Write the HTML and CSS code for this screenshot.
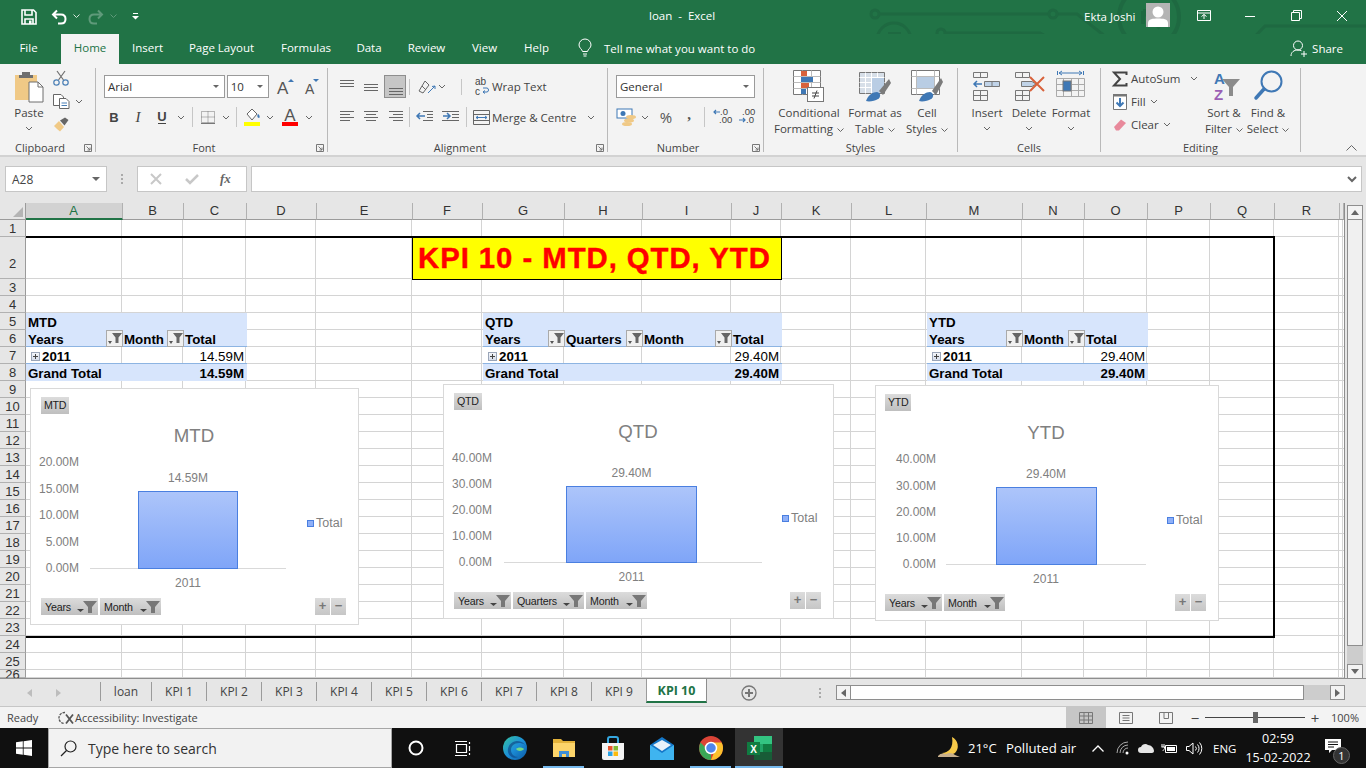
FILE: index.html
```html
<!DOCTYPE html>
<html lang="en">
<head>
<meta charset="utf-8">
<title>loan - Excel</title>
<link rel="stylesheet" href="styles.css">
</head>
<body>
<header class="titlebar">
  <svg class="circuit" width="506" height="66" viewBox="860 0 506 66" fill="none" stroke="#1e6941" stroke-width="3">
    <circle cx="875" cy="14" r="4"/><path d="M879 14H1049M1057 14H1077L1125 52H1240L1265 26H1366"/><circle cx="1053" cy="14" r="4"/>
    <circle cx="941" cy="33" r="4"/><path d="M945 33H1040L1096 64"/>
    <circle cx="1081" cy="43" r="4"/><path d="M865 62H968L990 43H1077M1085 43H1102L1122 62H1366"/><circle cx="865" cy="60" r="4"/>
    <circle cx="894" cy="40" r="17"/><path d="M888 34H901M888 34V46M888 34L904 50" stroke-width="4"/>
    <circle cx="1149" cy="17" r="30" stroke-width="4"/><path d="M1143 11H1156M1143 11V24M1143 11L1160 28" stroke-width="4"/>
  </svg>
  <div class="qat">
    <svg width="16" height="16" viewBox="0 0 16 16" fill="none" stroke="#fff" stroke-width="1.6"><path d="M1 1H12.5L15 3.5V15H1Z"/><path d="M4 1V6H11V1M4 15V10H12V15"/><path d="M8 11.5H10.5V15H8Z" fill="#fff" stroke="none"/></svg>
    <svg class="q-undo" width="16" height="16" viewBox="0 0 16 16" fill="none" stroke="#fff" stroke-width="2"><path d="M6 1.5L2 5.5L6 9.5M2 5.5H10C13 5.5 14.5 7.5 14.5 10S13 14.5 10 14.5H7"/></svg>
    <svg class="q-ch" width="7" height="5" viewBox="0 0 7 5" fill="none" stroke="#d7e6dc"><path d="M.5 .5L3.5 3.5L6.5 .5"/></svg>
    <svg class="q-redo" width="16" height="16" viewBox="0 0 16 16" fill="none" stroke="#5f9a7a" stroke-width="2"><path d="M10 1.5L14 5.5L10 9.5M14 5.5H6C3 5.5 1.5 7.5 1.5 10S3 14.5 6 14.5H9"/></svg>
    <svg class="q-ch" width="7" height="5" viewBox="0 0 7 5" fill="none" stroke="#5f9a7a"><path d="M.5 .5L3.5 3.5L6.5 .5"/></svg>
    <svg class="q-more" width="7" height="7" viewBox="0 0 7 7" fill="#fff"><path d="M1 0H6V1H1ZM0 3H7L3.5 6.5Z"/></svg>
  </div>
  <div class="doc-title">loan&nbsp; -&nbsp; Excel</div>
  <div class="user">Ekta Joshi</div>
  <svg class="avatar" width="24" height="24" viewBox="0 0 24 24"><rect width="24" height="24" fill="#b4b4b4"/><circle cx="12" cy="9" r="5.5" fill="#fff"/><path d="M2 24V20C2 16 7 15.5 12 15.5S22 16 22 20V24Z" fill="#fff"/></svg>
  <div class="winctl">
    <svg width="46" height="14" viewBox="0 0 46 14" fill="none" stroke="#fff"><path d="M16.5 1.5H29.5V11.5H16.5ZM16.5 4H29.5M23 10V5.5M20.5 7.5L23 5.5L25.5 7.5"/></svg>
    <svg width="46" height="14" viewBox="0 0 46 14" fill="none" stroke="#fff"><path d="M18 7.5H28"/></svg>
    <svg width="46" height="14" viewBox="0 0 46 14" fill="none" stroke="#fff"><path d="M18.5 3.5H26.5V11.5H18.5ZM20.5 3.5V1.5H28.5V9.5H26.5"/></svg>
    <svg width="46" height="14" viewBox="0 0 46 14" fill="none" stroke="#fff"><path d="M18 2L28 12M28 2L18 12"/></svg>
  </div>
</header>

<nav class="menubar">
  <span class="m">File</span><span class="m active">Home</span><span class="m">Insert</span><span class="m">Page Layout</span><span class="m">Formulas</span><span class="m">Data</span><span class="m">Review</span><span class="m">View</span><span class="m">Help</span>
  <svg class="bulb" width="14" height="18" viewBox="0 0 14 18" fill="none" stroke="#fff"><path d="M4.5 12.5C4 10 1 9 1 6A6 6 0 0 1 13 6C13 9 10 10 9.5 12.5ZM5 15H9M5.5 17H8.5"/></svg>
  <span class="tell">Tell me what you want to do</span>
  <span class="share">
    <svg width="18" height="17" viewBox="0 0 18 17" fill="none" stroke="#fff"><circle cx="8" cy="5.5" r="4.5"/><path d="M1 16C1 12 4 10 8 10C9.500 10 10.500 10.300 11.500 10.800M14 11V17M11 14H17"/></svg>
    Share
  </span>
</nav>

<section class="ribbon">
  <div class="group g-clip">
    <div class="g-body">
      <div class="big b-paste">
        <svg width="30" height="32" viewBox="0 0 30 32"><path d="M1 5H23V30H1Z" fill="#f0c986"/><path d="M8 5V2H16V5H19V8H5V5Z" fill="#6f6f6f"/><path d="M15 12H24L29 17V32H15Z" fill="#fff" stroke="#6f6f6f"/><path d="M24 12V17H29" fill="none" stroke="#6f6f6f"/></svg>
        <span class="lbl">Paste</span>
        <svg class="ch-big" width="8" height="5" viewBox="0 0 8 5" fill="none" stroke="#666"><path d="M1 1L4 4L7 1"/></svg>
      </div>
      <div class="clip-tools">
        <svg width="16" height="16" viewBox="0 0 16 16" fill="none" stroke="#6f6f6f" stroke-width="1.200"><path d="M4 1L10.500 10M12 1L5.500 10"/><circle cx="3.500" cy="12.500" r="2.700" stroke="#4a7fb5"/><circle cx="12.500" cy="12.500" r="2.700" stroke="#4a7fb5"/></svg>
        <div class="tool-row">
          <svg width="17" height="15" viewBox="0 0 17 15" fill="#fff" stroke="#666"><path d="M.5 .5H8L10.500 3V11.500H.5Z"/><path d="M6.500 4.500H13L16 7.500V14.500H6.500Z"/><path d="M8.500 9H14M8.500 11.500H14" stroke="#4a7fb5"/></svg>
          <svg class="tool-ch" width="8" height="5" viewBox="0 0 8 5" fill="none" stroke="#666"><path d="M1 1L4 4L7 1"/></svg>
        </div>
        <svg width="16" height="15" viewBox="0 0 16 15"><path d="M1 9L6 4L11 10L7 14.500L4 12Z" fill="#f0c986"/><path d="M7 3.500L12 0.500L15.500 3L11.500 8.500Z" fill="#666"/></svg>
      </div>
    </div>
    <div class="g-label launch">Clipboard<svg class="launcher" width="8" height="8" viewBox="0 0 8 8" fill="none" stroke="#777"><path d="M.5 7.500V.5H7.500V7.500ZM2.500 2.500L6 6M6 3.500V6H3.500"/></svg></div>
  </div>

  <div class="group g-font">
    <div class="g-body col">
      <div class="row1 pad8">
        <div class="select s-font"><span>Arial</span><i class="caret"></i></div>
        <div class="select s-size"><span>10</span><i class="caret"></i></div>
        <svg class="grow" width="50" height="22" viewBox="0 -3 50 22"><text x="0" y="15" class="ic-a">A</text><path d="M11 3L14 0L17 3Z" fill="#3f78b5"/><text x="28" y="15" class="ic-a small">A</text><path d="M36 0H42L39 3Z" fill="#3f78b5"/></svg>
      </div>
      <div class="row2 pad6">
        <svg width="24" height="16" viewBox="0 0 24 16"><text x="12" y="13" class="ic-t b">B</text></svg>
        <svg width="24" height="16" viewBox="0 0 24 16"><text x="12" y="13" class="ic-t it">I</text></svg>
        <svg width="24" height="16" viewBox="0 0 24 16"><text x="12" y="12" class="ic-t b">U</text><path d="M8 14.500H16" stroke="#444"/></svg>
        <svg width="14" height="5" viewBox="0 0 14 5" fill="none" stroke="#666"><path d="M4 1L7 4L10 1"/></svg>
        <i class="vsep m5"></i>
        <svg width="20" height="16" viewBox="0 0 20 16" fill="none" stroke="#777" stroke-dasharray="1 1"><path d="M3.500 2.500H16.500V13.500H3.500ZM10 2.500V13.500M3.500 8H16.500"/><path d="M3 14.500H17" stroke-dasharray="none"/></svg>
        <svg width="16" height="5" viewBox="0 0 16 5" fill="none" stroke="#666"><path d="M5 1L8 4L11 1"/></svg>
        <i class="vsep m2"></i>
        <svg width="26" height="20" viewBox="0 0 26 20"><path d="M8 7L13 2L18 7L13 13Z" fill="#fff" stroke="#666"/><path d="M19 7C21 8 21 11 20 11C18 11 18 8 19 7Z" fill="#3f78b5"/><rect x="5" y="15" width="16" height="4" fill="#ffff00"/></svg>
        <svg width="10" height="5" viewBox="0 0 10 5" fill="none" stroke="#666"><path d="M2 1L5 4L8 1"/></svg>
        <svg width="30" height="20" viewBox="0 0 30 20"><text x="15" y="14" class="ic-t a">A</text><rect x="7" y="15" width="16" height="4" fill="#f00"/></svg>
        <svg width="8" height="5" viewBox="0 0 8 5" fill="none" stroke="#666"><path d="M1 1L4 4L7 1"/></svg>
      </div>
    </div>
    <div class="g-label launch">Font<svg class="launcher" width="8" height="8" viewBox="0 0 8 8" fill="none" stroke="#777"><path d="M.5 7.500V.5H7.500V7.500ZM2.500 2.500L6 6M6 3.500V6H3.500"/></svg></div>
  </div>

  <div class="group g-align">
    <div class="g-body col">
      <div class="row1 pad7">
        <svg width="24" height="16" viewBox="0 0 24 16" stroke="#666"><path d="M5 1.500H19M5 4.500H19M5 7.500H19"/></svg>
        <svg width="25" height="16" viewBox="0 0 25 16" stroke="#666"><path d="M5 5.500H19M5 8.500H19M5 11.500H19"/></svg>
        <div class="pressed"><svg width="22" height="21" viewBox="0 0 22 21" stroke="#666"><path d="M4 12.500H18M4 15.500H18M4 18.500H18"/></svg></div>
        <i class="vsep m4 tall"></i>
        <svg width="24" height="18" viewBox="0 0 24 18" fill="none" stroke="#666"><path d="M5 13L11 3L15 7L9 15ZM8 8L12 12"/><path d="M14 15L21 8M21 8L18 8.500M21 8V11" stroke="#3f78b5"/></svg>
        <svg width="8" height="5" viewBox="0 0 8 5" fill="none" stroke="#666"><path d="M1 1L4 4L7 1"/></svg>
        <i class="vsep m15 tall"></i>
        <svg class="wrapic" width="18" height="22" viewBox="0 -2 18 22"><text x="1" y="7" class="ic-s">ab</text><text x="1" y="17" class="ic-s">c</text><path d="M9 14H13C15 14 15 10 13 10H9M9 14L11 12.500M9 14L11 15.500" fill="none" stroke="#3f78b5"/></svg>
        <span class="txt">Wrap Text</span>
      </div>
      <div class="row2 pad7">
        <svg width="24" height="14" viewBox="0 0 24 14" stroke="#666"><path d="M5 1.500H19M5 4.500H15M5 7.500H19M5 10.500H15"/></svg>
        <svg width="25" height="14" viewBox="0 0 25 14" stroke="#666"><path d="M5 1.500H19M7 4.500H17M5 7.500H19M7 10.500H17"/></svg>
        <svg width="24" height="14" viewBox="0 0 24 14" stroke="#666"><path d="M5 1.500H19M9 4.500H19M5 7.500H19M9 10.500H19"/></svg>
        <i class="vsep m0"></i>
        <svg width="28" height="14" viewBox="0 0 28 14" fill="none"><path d="M12 1.500H22M16 4.500H22M16 7.500H22M12 10.500H22" stroke="#666"/><path d="M14 6H6M9 3L6 6L9 9" stroke="#3f78b5" stroke-width="1.500"/></svg>
        <svg width="24" height="14" viewBox="0 0 24 14" fill="none"><path d="M3 1.500H20M13 4.500H20M13 7.500H20M3 10.500H20" stroke="#666"/><path d="M4 6H11M8 3L11 6L8 9" stroke="#3f78b5" stroke-width="1.500"/></svg>
        <i class="vsep m3"></i>
        <svg class="mergeic" width="17" height="15" viewBox="0 0 17 15" fill="none"><path d="M.5 .5H16.500V14.500H.5Z" stroke="#666"/><path d="M.5 4.500H16.500M.5 10.500H16.500" stroke="#666"/><path d="M3 7.500H14M5 6L3 7.500L5 9M12 6L14 7.500L12 9" stroke="#3f78b5"/></svg>
        <span class="txt">Merge &amp; Centre</span>
        <svg class="merge-ch" width="8" height="5" viewBox="0 0 8 5" fill="none" stroke="#666"><path d="M1 1L4 4L7 1"/></svg>
      </div>
    </div>
    <div class="g-label launch">Alignment<svg class="launcher" width="8" height="8" viewBox="0 0 8 8" fill="none" stroke="#777"><path d="M.5 7.500V.5H7.500V7.500ZM2.500 2.500L6 6M6 3.500V6H3.500"/></svg></div>
  </div>

  <div class="group g-num">
    <div class="g-body col">
      <div class="row1 pad8"><div class="select s-gen"><span>General</span><i class="caret"></i></div></div>
      <div class="row2 pad8">
        <svg width="22" height="18" viewBox="0 0 22 18"><rect x="1" y="1" width="15" height="9" fill="#fff" stroke="#3f78b5"/><circle cx="7" cy="5.500" r="2.500" fill="#3f78b5"/><ellipse cx="15" cy="9" rx="5" ry="2" fill="#f0c986"/><ellipse cx="13" cy="12.500" rx="5" ry="2" fill="#f0c986"/><ellipse cx="11" cy="16" rx="5" ry="2" fill="#f0c986"/></svg>
        <svg width="14" height="5" viewBox="0 0 14 5" fill="none" stroke="#666"><path d="M4 1L7 4L10 1"/></svg>
        <span class="pct">%</span>
        <span class="comma">,</span>
        <i class="vsep m7"></i>
        <svg width="20" height="18" viewBox="0 0 20 18"><text x="8" y="7" class="ic-n">.0</text><text x="7" y="15" class="ic-n">.00</text><path d="M8 4H2M4 2L2 4L4 6" fill="none" stroke="#3f78b5" stroke-width="1.200"/></svg>
        <svg class="dec2" width="20" height="18" viewBox="0 0 20 18"><text x="5" y="7" class="ic-n">.00</text><text x="9" y="15" class="ic-n">.0</text><path d="M2 12H8M6 10L8 12L6 14" fill="none" stroke="#3f78b5" stroke-width="1.200"/></svg>
      </div>
    </div>
    <div class="g-label launch">Number<svg class="launcher" width="8" height="8" viewBox="0 0 8 8" fill="none" stroke="#777"><path d="M.5 7.500V.5H7.500V7.500ZM2.500 2.500L6 6M6 3.500V6H3.500"/></svg></div>
  </div>

  <div class="group g-styles">
    <div class="g-body">
      <div class="big w74">
        <svg width="32" height="32" viewBox="0 0 32 32"><path d="M.5 .5H27.500V24.500H.5Z" fill="#fff" stroke="#777"/><path d="M9.500 .5V24.500M18.500 .5V24.500M.5 6.500H27.500M.5 12.500H27.500M.5 18.500H27.500" stroke="#bbb"/><rect x="8" y="1" width="6" height="5" fill="#d8623b"/><rect x="8" y="7" width="12" height="5" fill="#3f78b5"/><rect x="8" y="13" width="8" height="5" fill="#d8623b"/><rect x="8" y="19" width="5" height="5" fill="#3f78b5"/><rect x="14.500" y="17.500" width="16" height="14" fill="#fff" stroke="#777"/><path d="M19 23H26M19 26H26M24 20.500L21 28.500" stroke="#444" fill="none"/></svg>
        <span class="lbl">Conditional<br>Formatting <svg width="7" height="4" viewBox="0 0 7 4" fill="none" stroke="#666"><path d="M.5 .5L3.500 3.500L6.500 .5"/></svg></span>
      </div>
      <div class="big w58">
        <svg width="32" height="32" viewBox="0 0 32 32"><path d="M.5 2.500H25.500V23.500H.5Z" fill="#d7dfe8" stroke="#777"/><path d="M.5 7.500H25.500M.5 12.500H25.500M.5 17.500H25.500M6.500 2.500V23.500M12.500 2.500V23.500M18.500 2.500V23.500" stroke="#fff"/><rect x="13" y="8" width="12" height="15" fill="#b9cde4"/><path d="M20 21L30 9L32 13L24 25Z" fill="#7b7b7b"/><path d="M7 31C9 25 14 22 18 22C22 23 22 27 19 29C16 31 10 32 7 31Z" fill="#3f78b5"/></svg>
        <span class="lbl">Format as<br>Table <svg width="7" height="4" viewBox="0 0 7 4" fill="none" stroke="#666"><path d="M.5 .5L3.500 3.500L6.500 .5"/></svg></span>
      </div>
      <div class="big w46">
        <svg width="32" height="32" viewBox="0 0 32 32"><path d="M.5 .5H28.500V24.500H.5Z" fill="#fff" stroke="#777"/><path d="M.5 6.500H28.500M.5 18.500H28.500M5.500 .5V24.500M23.500 .5V24.500" stroke="#bbb"/><rect x="6" y="7" width="17" height="11" fill="#b9cde4"/><path d="M21 21L30 8L32 12L25 25Z" fill="#7b7b7b"/><path d="M8 31C10 25 15 22 19 22C23 23 23 27 20 29C17 31 11 32 8 31Z" fill="#3f78b5"/></svg>
        <span class="lbl">Cell<br>Styles <svg width="7" height="4" viewBox="0 0 7 4" fill="none" stroke="#666"><path d="M.5 .5L3.500 3.500L6.500 .5"/></svg></span>
      </div>
    </div>
    <div class="g-label">Styles</div>
  </div>

  <div class="group g-cells">
    <div class="g-body">
      <div class="big w42">
        <svg width="32" height="32" viewBox="0 0 32 32" fill="none" stroke="#777"><path d="M2.500 2.500H16.500V7.500H2.500ZM9.500 2.500V7.500M2.500 20.500H16.500V30.500H2.500ZM2.500 25.500H16.500M9.500 20.500V30.500"/><path d="M13.500 11.500H28.500V16.500H13.500ZM21 11.500V16.500" fill="#c0d3e8" stroke="#777"/><path d="M11 14H3M6 11L3 14L6 17" stroke="#3f78b5" stroke-width="1.500"/></svg>
        <span class="lbl">Insert</span>
        <svg class="ch-big" width="8" height="5" viewBox="0 0 8 5" fill="none" stroke="#666"><path d="M1 1L4 4L7 1"/></svg>
      </div>
      <div class="big w42">
        <svg width="32" height="32" viewBox="0 0 32 32" fill="none" stroke="#777"><path d="M2.500 2.500H16.500V7.500H2.500ZM9.500 2.500V7.500M2.500 20.500H16.500V30.500H2.500ZM2.500 25.500H16.500M9.500 20.500V30.500"/><path d="M8.500 11.500H19L23 14L19 16.500H8.500Z" fill="#c0d3e8"/><path d="M17 7L31 21M31 7L17 21" stroke="#d8623b" stroke-width="2"/></svg>
        <span class="lbl">Delete</span>
        <svg class="ch-big" width="8" height="5" viewBox="0 0 8 5" fill="none" stroke="#666"><path d="M1 1L4 4L7 1"/></svg>
      </div>
      <div class="big w42">
        <svg width="32" height="32" viewBox="0 0 32 32" fill="none" stroke="#777"><path d="M2.500 1V5M28.500 1V5M4 3H27M4 3L7 1M4 3L7 5M27 3L24 1M27 3L24 5" stroke="#3f78b5"/><path d="M1.500 8.500H29.500V26.500H1.500ZM1.500 14.500H29.500M1.500 20.500H29.500M8.500 8.500V26.500M16.500 8.500V26.500M23.500 8.500V26.500" stroke="#aaa"/><rect x="8" y="11" width="8" height="10" fill="#3f78b5"/></svg>
        <span class="lbl">Format</span>
        <svg class="ch-big" width="8" height="5" viewBox="0 0 8 5" fill="none" stroke="#666"><path d="M1 1L4 4L7 1"/></svg>
      </div>
    </div>
    <div class="g-label">Cells</div>
  </div>

  <div class="group g-edit">
    <div class="g-body">
      <div class="edit-col">
        <div class="e-row"><svg width="19" height="16" viewBox="0 0 19 16" fill="none" stroke="#444" stroke-width="2"><path d="M14.500 4V1.500H2L8 8L2 14.500H14.500V12"/></svg><span class="txt">AutoSum</span><svg class="as-ch" width="8" height="5" viewBox="0 0 8 5" fill="none" stroke="#666"><path d="M1 1L4 4L7 1"/></svg></div>
        <div class="e-row"><svg width="19" height="16" viewBox="0 0 19 16"><path d="M1.500 .5H14.500V15.500H1.500Z" fill="#fff" stroke="#777"/><rect x="1" y="0" width="14" height="2.500" fill="#777"/><path d="M8 4V12M4.500 8.500L8 12L11.500 8.500" fill="none" stroke="#3f78b5" stroke-width="2"/></svg><span class="txt">Fill</span><svg class="e-ch" width="8" height="5" viewBox="0 0 8 5" fill="none" stroke="#666"><path d="M1 1L4 4L7 1"/></svg></div>
        <div class="e-row"><svg width="19" height="14" viewBox="0 0 19 14"><path d="M2 9L9 1.500L14 5L7 12.500H4Z" fill="#e8899b"/></svg><span class="txt">Clear</span><svg class="e-ch" width="8" height="5" viewBox="0 0 8 5" fill="none" stroke="#666"><path d="M1 1L4 4L7 1"/></svg></div>
      </div>
      <div class="big w44">
        <svg width="32" height="32" viewBox="0 0 32 32"><text x="6" y="14" class="ic-az bl">A</text><text x="6" y="30" class="ic-az pu">Z</text><path d="M14 9H32L25 17V26H21V17Z" fill="#8b8b8b"/></svg>
        <span class="lbl">Sort &amp;<br>Filter <svg width="7" height="4" viewBox="0 0 7 4" fill="none" stroke="#666"><path d="M.5 .5L3.500 3.500L6.500 .5"/></svg></span>
      </div>
      <div class="big w44">
        <svg width="32" height="32" viewBox="0 0 32 32" fill="none" stroke="#3f78b5"><circle cx="19.500" cy="11.500" r="10" stroke-width="2"/><path d="M12 19L4 28" stroke-width="3.500" stroke-linecap="round"/></svg>
        <span class="lbl">Find &amp;<br>Select <svg width="7" height="4" viewBox="0 0 7 4" fill="none" stroke="#666"><path d="M.5 .5L3.500 3.500L6.500 .5"/></svg></span>
      </div>
    </div>
    <div class="g-label">Editing</div>
  </div>
  <svg class="collapse" width="11" height="6" viewBox="0 0 11 6" fill="none" stroke="#666"><path d="M.5 5.500L5.500 .5L10.500 5.500"/></svg>
</section>

<section class="formula">
  <div class="namebox"><span>A28</span><i class="caret dark"></i></div>
  <div class="fdots"><i></i><i></i><i></i></div>
  <div class="fbtns">
    <svg width="14" height="12" viewBox="0 0 14 12" fill="none" stroke="#c8c8c8" stroke-width="2"><path d="M2 1L12 11M12 1L2 11"/></svg>
    <svg width="14" height="12" viewBox="0 0 14 12" fill="none" stroke="#c8c8c8" stroke-width="2.500"><path d="M1 6L5 10L13 2"/></svg>
    <span class="fx">fx</span>
  </div>
  <div class="finput"><svg width="10" height="6" viewBox="0 0 10 6" fill="none" stroke="#666" stroke-width="2"><path d="M1 1L5 5L9 1"/></svg></div>
</section>

<section class="book">
  <div class="sheet">
    <div class="corner"><i></i></div>
    <div class="ch sel">A</div><div class="ch">B</div><div class="ch">C</div><div class="ch">D</div><div class="ch">E</div><div class="ch">F</div><div class="ch">G</div><div class="ch">H</div><div class="ch">I</div><div class="ch">J</div><div class="ch">K</div><div class="ch">L</div><div class="ch">M</div><div class="ch">N</div><div class="ch">O</div><div class="ch">P</div><div class="ch">Q</div><div class="ch">R</div><div class="ch"></div>
    <div class="rh">1</div><div class="rh tall">2</div><div class="rh">3</div><div class="rh">4</div><div class="rh">5</div><div class="rh">6</div><div class="rh">7</div><div class="rh">8</div><div class="rh">9</div><div class="rh">10</div><div class="rh">11</div><div class="rh">12</div><div class="rh">13</div><div class="rh">14</div><div class="rh">15</div><div class="rh">16</div><div class="rh">17</div><div class="rh">18</div><div class="rh">19</div><div class="rh">20</div><div class="rh">21</div><div class="rh">22</div><div class="rh">23</div><div class="rh">24</div><div class="rh">25</div><div class="rh">26</div>

    <div class="kpi-title">KPI 10 - MTD, QTD, YTD</div>

    <div class="pivot pv1">
      <div class="p-cap s3">MTD</div>
      <div class="p-h">Years<i class="fbtn"></i></div><div class="p-h">Month<i class="fbtn"></i></div><div class="p-h">Total</div>
      <div class="p-v"><i class="exp"></i>2011</div><div class="p-v"></div><div class="p-v num">14.59M</div>
      <div class="p-g s2">Grand Total</div><div class="p-g num">14.59M</div>
    </div>
    <div class="pivot pv2">
      <div class="p-cap s4">QTD</div>
      <div class="p-h">Years<i class="fbtn"></i></div><div class="p-h">Quarters<i class="fbtn"></i></div><div class="p-h">Month<i class="fbtn"></i></div><div class="p-h">Total</div>
      <div class="p-v"><i class="exp"></i>2011</div><div class="p-v"></div><div class="p-v"></div><div class="p-v num">29.40M</div>
      <div class="p-g s3">Grand Total</div><div class="p-g num">29.40M</div>
    </div>
    <div class="pivot pv3">
      <div class="p-cap s3">YTD</div>
      <div class="p-h">Years<i class="fbtn"></i></div><div class="p-h">Month<i class="fbtn"></i></div><div class="p-h">Total</div>
      <div class="p-v"><i class="exp"></i>2011</div><div class="p-v"></div><div class="p-v num">29.40M</div>
      <div class="p-g s2">Grand Total</div><div class="p-g num">29.40M</div>
    </div>

    <div class="frame"></div>

    <div class="chart c1">
      <svg class="plot" width="327" height="235" viewBox="31 389 327 235">
        <defs><linearGradient id="bar" x1="0" y1="0" x2="0" y2="1"><stop offset="0" stop-color="#adc5fa"/><stop offset="1" stop-color="#7fa5f8"/></linearGradient></defs>
        <text x="194" y="442" class="t-title">MTD</text>
        <text x="79" y="466" class="t-y">20.00M</text><text x="79" y="493" class="t-y">15.00M</text><text x="79" y="519" class="t-y">10.00M</text><text x="79" y="546" class="t-y">5.00M</text><text x="79" y="572" class="t-y">0.00M</text>
        <path d="M90 568.500H286" class="axis"/>
        <rect x="138.500" y="491.500" width="99" height="77" class="barrect"/>
        <text x="188" y="482" class="t-c">14.59M</text><text x="188" y="587" class="t-c">2011</text>
        <rect x="307.500" y="520.500" width="6" height="6" class="leg"/><text x="316" y="527" class="t-l">Total</text>
      </svg>
      <div class="tag">MTD</div>
      <div class="c-foot">
        <div class="fb fb-y">Years<svg width="24" height="13" viewBox="0 0 24 13"><path d="M3 9H10L6.500 12Z" fill="#444"/><path d="M9 1H23L18 7V13H14V7Z" fill="#777"/></svg></div>
        <div class="fb fb-m">Month<svg width="24" height="13" viewBox="0 0 24 13"><path d="M3 9H10L6.500 12Z" fill="#444"/><path d="M9 1H23L18 7V13H14V7Z" fill="#777"/></svg></div>
        <div class="zoom"><span>+</span><span>−</span></div>
      </div>
    </div>

    <div class="chart c2">
      <svg class="plot" width="389" height="233" viewBox="444 385 389 233">
        <text x="638" y="438" class="t-title">QTD</text>
        <text x="492" y="462" class="t-y">40.00M</text><text x="492" y="488" class="t-y">30.00M</text><text x="492" y="514" class="t-y">20.00M</text><text x="492" y="540" class="t-y">10.00M</text><text x="492" y="566" class="t-y">0.00M</text>
        <path d="M504 562.500H762" class="axis"/>
        <rect x="566.500" y="486.500" width="130" height="76" class="barrect"/>
        <text x="631.500" y="477" class="t-c">29.40M</text><text x="631.500" y="581" class="t-c">2011</text>
        <rect x="782.500" y="515.500" width="6" height="6" class="leg"/><text x="791" y="522" class="t-l">Total</text>
      </svg>
      <div class="tag">QTD</div>
      <div class="c-foot">
        <div class="fb fb-y">Years<svg width="24" height="13" viewBox="0 0 24 13"><path d="M3 9H10L6.500 12Z" fill="#444"/><path d="M9 1H23L18 7V13H14V7Z" fill="#777"/></svg></div>
        <div class="fb fb-q">Quarters<svg width="24" height="13" viewBox="0 0 24 13"><path d="M3 9H10L6.500 12Z" fill="#444"/><path d="M9 1H23L18 7V13H14V7Z" fill="#777"/></svg></div>
        <div class="fb fb-m">Month<svg width="24" height="13" viewBox="0 0 24 13"><path d="M3 9H10L6.500 12Z" fill="#444"/><path d="M9 1H23L18 7V13H14V7Z" fill="#777"/></svg></div>
        <div class="zoom"><span>+</span><span>−</span></div>
      </div>
    </div>

    <div class="chart c3">
      <svg class="plot" width="342" height="234" viewBox="876 386 342 234">
        <text x="1046" y="439" class="t-title">YTD</text>
        <text x="936" y="463" class="t-y">40.00M</text><text x="936" y="490" class="t-y">30.00M</text><text x="936" y="516" class="t-y">20.00M</text><text x="936" y="542" class="t-y">10.00M</text><text x="936" y="568" class="t-y">0.00M</text>
        <path d="M946 564.500H1146" class="axis"/>
        <rect x="996.500" y="487.500" width="100" height="77" class="barrect"/>
        <text x="1046" y="478" class="t-c">29.40M</text><text x="1046" y="583" class="t-c">2011</text>
        <rect x="1167.500" y="517.500" width="6" height="6" class="leg"/><text x="1176" y="524" class="t-l">Total</text>
      </svg>
      <div class="tag">YTD</div>
      <div class="c-foot">
        <div class="fb fb-y">Years<svg width="24" height="13" viewBox="0 0 24 13"><path d="M3 9H10L6.500 12Z" fill="#444"/><path d="M9 1H23L18 7V13H14V7Z" fill="#777"/></svg></div>
        <div class="fb fb-m">Month<svg width="24" height="13" viewBox="0 0 24 13"><path d="M3 9H10L6.500 12Z" fill="#444"/><path d="M9 1H23L18 7V13H14V7Z" fill="#777"/></svg></div>
        <div class="zoom"><span>+</span><span>−</span></div>
      </div>
    </div>
  </div>

  <div class="vscroll">
    <div class="sb-btn"><svg width="8" height="5" viewBox="0 0 8 5" fill="#666"><path d="M4 0L8 5H0Z"/></svg></div>
    <div class="sb-thumb"></div>
    <div class="sb-btn"><svg width="8" height="5" viewBox="0 0 8 5" fill="#666"><path d="M4 5L8 0H0Z"/></svg></div>
  </div>
</section>

<section class="tabbar">
  <div class="tabnav">
    <svg width="5" height="8" viewBox="0 0 5 8" fill="#bdbdbd"><path d="M5 0V8L0 4Z"/></svg>
    <svg width="5" height="8" viewBox="0 0 5 8" fill="#bdbdbd"><path d="M0 0V8L5 4Z"/></svg>
  </div>
  <div class="tab first">loan</div><div class="tab">KPI 1</div><div class="tab">KPI 2</div><div class="tab">KPI 3</div><div class="tab">KPI 4</div><div class="tab">KPI 5</div><div class="tab">KPI 6</div><div class="tab">KPI 7</div><div class="tab">KPI 8</div><div class="tab">KPI 9</div><div class="tab active">KPI 10</div>
  <div class="tabtools">
    <svg width="16" height="16" viewBox="0 0 16 16" fill="none" stroke="#777" stroke-width="1.300"><circle cx="8" cy="8" r="7"/><path d="M8 4V12M4 8H12" stroke-width="2"/></svg>
    <div class="tdots"><i></i><i></i><i></i></div>
  </div>
  <div class="hscroll">
    <div class="hb"><svg width="5" height="8" viewBox="0 0 5 8" fill="#666"><path d="M5 0V8L0 4Z"/></svg></div>
    <div class="h-thumb"></div>
    <div class="h-track"></div>
    <div class="hb"><svg width="5" height="8" viewBox="0 0 5 8" fill="#666"><path d="M0 0V8L5 4Z"/></svg></div>
  </div>
</section>

<footer class="status">
  <span class="ready">Ready</span>
  <svg class="acc" width="17" height="14" viewBox="0 0 17 14" fill="none" stroke="#555"><path d="M8 1.500A5.500 5.500 0 1 0 7 12.500" stroke-width="1.300" stroke-dasharray="2.500 1"/><path d="M9 3.500L16 12.500M16 3.500L9 12.500" stroke-width="1.800"/></svg>
  <span class="acc-t">Accessibility: Investigate</span>
  <div class="views">
    <div class="view on"><svg width="14" height="12" viewBox="0 0 14 12" fill="none" stroke="#777"><path d="M.5 .5H13.500V11.500H.5ZM.5 4H13.500M.5 8H13.500M5 .5V11.500M9.500 .5V11.500"/></svg></div>
    <div class="view"><svg width="14" height="12" viewBox="0 0 14 12" fill="none" stroke="#777"><path d="M.5 .5H13.500V11.500H.5ZM3.500 3.500H10.500M3.500 6H10.500M3.500 8.500H10.500"/></svg></div>
    <div class="view"><svg width="14" height="12" viewBox="0 0 14 12" fill="none" stroke="#777"><path d="M.5 .5H13.500V11.500H.5ZM5 .5V6.500H9.500V.5"/></svg></div>
  </div>
  <span class="zm">−</span>
  <div class="slider"><i></i></div>
  <span class="zm">+</span>
  <span class="pcnt">100%</span>
</footer>

<footer class="taskbar">
  <div class="start"><svg width="16" height="16" viewBox="0 0 16 16" fill="#fff"><path d="M0 2.300L6.800 1.300V7.500H0ZM7.600 1.200L16 0V7.500H7.600ZM0 8.400H6.800V14.700L0 13.700ZM7.600 8.400H16V16L7.600 14.800Z"/></svg></div>
  <div class="search">
    <svg width="17" height="17" viewBox="0 0 17 17" fill="none" stroke="#222" stroke-width="1.200"><circle cx="10.500" cy="6.500" r="5.500"/><path d="M6.500 10.500L1 16"/></svg>
    <span>Type here to search</span>
  </div>
  <div class="tb tb-c"><svg width="16" height="16" viewBox="0 0 16 16" fill="none" stroke="#fff" stroke-width="2"><circle cx="8" cy="8" r="6.500"/></svg></div>
  <div class="tb tb-t"><svg width="16" height="15" viewBox="0 0 16 15" fill="none" stroke="#fff" stroke-width="1.200"><path d="M0 .5H12M0 14.500H12M1.500 3.500H11.500V11.500H1.500Z"/><path d="M14.500 1V3M14.500 5V10M14.500 12V14"/></svg></div>
  <div class="tb"><svg width="24" height="24" viewBox="0 0 24 24"><defs><linearGradient id="ed" x1="0" y1="0" x2="1" y2="1"><stop offset="0" stop-color="#36c5a0"/><stop offset=".5" stop-color="#1c8fd8"/><stop offset="1" stop-color="#0c59a4"/></linearGradient></defs><circle cx="12" cy="12" r="12" fill="url(#ed)"/><path d="M24 13C24 9 20 7 16 7C11 7 8 10 8 14C8 18 11 21 15 21C12 23 6 21 5 16C4 11 8 5 14 5C20 5 23 9 24 13Z" fill="#0e3f7e" opacity=".6"/><path d="M13 13C15 11 19 11 21 13C20 15 15 16 13 13Z" fill="#7be27f" opacity=".9"/></svg></div>
  <div class="tb on1"><svg width="22" height="20" viewBox="0 0 22 20"><path d="M0 1H8L10 3H22V19H0Z" fill="#e3b23a"/><path d="M0 5H22V19H0Z" fill="#fcd46a"/><path d="M6 13H16V19H13V16H9V19H6Z" fill="#3f8fd8"/></svg></div>
  <div class="tb"><svg width="24" height="24" viewBox="0 0 24 24"><path d="M1 7H23V22A2 2 0 0 1 21 24H3A2 2 0 0 1 1 22Z" fill="#f4f4f4"/><path d="M7 7V3A2 2 0 0 1 9 1H15A2 2 0 0 1 17 3V7" fill="none" stroke="#35a7e0" stroke-width="2"/><rect x="7" y="10" width="4.500" height="4.500" fill="#e8532d"/><rect x="12.500" y="10" width="4.500" height="4.500" fill="#7fb935"/><rect x="7" y="15.500" width="4.500" height="4.500" fill="#2aa3e6"/><rect x="12.500" y="15.500" width="4.500" height="4.500" fill="#fcbb0d"/></svg></div>
  <div class="tb"><svg width="24" height="23" viewBox="0 0 24 23"><path d="M0 8L12 0L24 8V23H0Z" fill="#1477c8"/><path d="M0 8L12 16L24 8V23H0Z" fill="#3fb4f0"/><path d="M3 8L12 3L21 8L12 14Z" fill="#fff" opacity=".9"/></svg></div>
  <div class="tb on1"><svg width="24" height="24" viewBox="0 0 24 24"><circle cx="12" cy="12" r="12" fill="#db4437"/><path d="M12 24A12 12 0 0 0 24 12C24 10 23.500 8 22.500 6.500H12L17 12Z" fill="#fbc02d"/><path d="M12 24A12 12 0 0 1 1.500 6.500L7 12L12 17Z" fill="#3aa757"/><circle cx="12" cy="12" r="5.500" fill="#4f86ec" stroke="#fff" stroke-width="1.500"/></svg></div>
  <div class="tb excel"><svg width="25" height="24" viewBox="0 0 25 24"><rect x="7" y="0" width="18" height="24" rx="1" fill="#21a366"/><rect x="7" y="0" width="18" height="8" fill="#33c481"/><rect x="7" y="16" width="18" height="8" fill="#185c37"/><rect x="16" y="8" width="9" height="8" fill="#107c41"/><rect x="0" y="6" width="13" height="13" fill="#107c41"/><text x="6.500" y="16.500" class="ic-x">X</text></svg></div>
  <div class="tray">
    <svg class="wx" width="24" height="24" viewBox="0 0 24 24"><path d="M15 1A10 10 0 0 1 18 17C14 20 8 19 5 17C11 17 17 12 15 1Z" fill="#f7c948"/><path d="M1 20C3 17 7 17 9 18C12 16 16 17 18 19L23 21H1Z" fill="#c9b08c"/></svg>
    <span class="temp">21°C</span><span class="air">Polluted air</span>
    <svg class="caretup" width="12" height="7" viewBox="0 0 12 7" fill="none" stroke="#fff" stroke-width="1.300"><path d="M.5 6.500L6 1L11.500 6.500"/></svg>
    <svg class="wifi" width="14" height="14" viewBox="0 0 14 14" fill="none" stroke="#aaa"><path d="M1 12A11 11 0 0 1 12 1M4 12A8 8 0 0 1 12 4M7 12A5 5 0 0 1 12 7"/><circle cx="11" cy="12" r="1.500" fill="#fff" stroke="none"/></svg>
    <svg class="cloud" width="16" height="10" viewBox="0 0 16 10" fill="#e6e6e6"><path d="M3 10A3 3 0 0 1 3 4C4 1 8 0 10 2C13 2 16 5 16 8C16 9 15 10 14 10Z"/></svg>
    <svg class="batt" width="16" height="10" viewBox="0 0 16 10" fill="none" stroke="#fff"><path d="M4.500 2.500H15.500V9.500H4.500ZM1 1V4M3 1V4M0.500 4H3.500V5.500C3 7 2 7 2 8"/><rect x="6" y="4" width="8" height="4" fill="#fff" stroke="none"/></svg>
    <svg class="spk" width="17" height="13" viewBox="0 0 17 13" fill="none" stroke="#fff"><path d="M.5 4.500H3L7 1V12L3 8.500H.5ZM9.500 4.500A3 3 0 0 1 9.500 8.500M11.500 2.500A6 6 0 0 1 11.500 10.500M13.500 .5A9 9 0 0 1 13.500 12.500"/></svg>
    <span class="eng">ENG</span>
    <div class="clock"><span>02:59</span><span>15-02-2022</span></div>
    <div class="notif">
      <svg width="16" height="14" viewBox="0 0 16 14" fill="#fff"><path d="M0 0H16V11H7L4 14V11H0Z"/><path d="M3 3H13M3 5.500H13M3 8H9" stroke="#101010"/></svg>
      <span class="badge">1</span>
    </div>
  </div>
</footer>
</body>
</html>
```
FILE: styles.css
```css
* { box-sizing: border-box; }
html, body { margin: 0; padding: 0; }
body {
  width: 1366px; height: 768px; overflow: hidden;
  display: flex; flex-direction: column;
  font-family: "Open Sans", "Noto Sans", sans-serif;
  font-size: 11.5px; color: #444; background: #e6e6e6;
}
svg { display: block; flex: none; overflow: visible; }
i { display: block; font-style: normal; }

/* Title bar */
.titlebar { position: relative; height: 34px; background: #217346; color: #fff; display: flex; align-items: center; flex: none; overflow: hidden; }
.circuit { position: absolute; left: 860px; top: 0; }
.qat { width: 649px; padding: 0 0 1px 21px; display: flex; align-items: center; position: relative; }
.q-undo { margin-left: 14px; }
.q-ch { margin-left: 6px; }
.q-redo { margin-left: 8px; }
.q-more { margin-left: 15px; }
.doc-title { width: 435px; position: relative; font-size: 11.5px; padding-bottom: 3px; }
.user { width: 62px; position: relative; font-size: 11.5px; padding-bottom: 2px; }
.avatar { position: relative; margin-bottom: 4px; }
.winctl { display: flex; position: relative; margin: 0 0 2px 11px; }

/* Menu */
.menubar { height: 30px; background: #217346; color: #fff; display: flex; align-items: center; flex: none; position: relative; font-size: 11.5px; }
.m { height: 30px; line-height: 28px; text-align: center; flex: none; }
.m:nth-child(1) { width: 61px; padding: 0 4px 0 0; text-align: center; }
.m.active { background: #f3f3f3; color: #217346; width: 58px; }
.m:nth-child(3) { width: 57px; }
.m:nth-child(4) { width: 91px; }
.m:nth-child(5) { width: 78px; }
.m:nth-child(6) { width: 48px; }
.m:nth-child(7) { width: 67px; }
.m:nth-child(8) { width: 49px; }
.m:nth-child(9) { width: 55px; }
.bulb { margin: 0 0 2px 14px; }
.tell { margin: 0 0 2px 12px; }
.share { margin: 0 23px 2px auto; display: flex; align-items: center; gap: 4px; }

/* Ribbon */
.ribbon { position: relative; height: 93px; background: #f3f3f3; border-bottom: 2px solid #d2d2d2; display: flex; flex: none; }
.group { display: flex; flex-direction: column; height: 84px; margin-top: 4px; border-right: 1px solid #b9b9b9; }
.g-clip { width: 96px; } .g-font { width: 232px; } .g-align { width: 280px; } .g-num { width: 156px; }
.g-styles { width: 194px; } .g-cells { width: 143px; } .g-edit { width: 200px; }
.g-body { flex: none; height: 72px; display: flex; padding: 2px 0 0 8px; }
.g-body.col { flex-direction: column; padding: 7px 0 0; }
.g-label { height: 12px; line-height: 16px; text-align: center; position: relative; font-size: 11px; }
.g-label.launch { padding-right: 15px; }
.launcher { position: absolute; right: 3px; top: 4px; }
.big { display: flex; flex-direction: column; align-items: center; flex: none; }
.big .lbl { line-height: 16px; margin-top: 3px; text-align: center; white-space: nowrap; font-size: 11.5px; }
.big .lbl svg { display: inline-block; vertical-align: middle; margin-left: 1px; }
.ch-big { margin-top: 5px; }
.w74 { width: 74px; } .w58 { width: 58px; } .w46 { width: 46px; } .w42 { width: 42px; } .w44 { width: 44px; }
.b-paste { width: 30px; margin-left: 6px; }
.clip-tools { margin-left: 9px; display: flex; flex-direction: column; gap: 8px; }
.tool-row { display: flex; align-items: center; }
.tool-ch { margin-left: 5px; }
.row1 { height: 23px; display: flex; align-items: center; }
.row2 { height: 20px; margin-top: 9px; display: flex; align-items: center; }
.pad8 { padding-left: 8px; } .pad6 { padding-left: 6px; } .pad7 { padding-left: 7px; }
.select { height: 23px; background: #fff; border: 1px solid #9a9a9a; display: flex; align-items: center; justify-content: space-between; padding: 0 5px 0 3px; font-size: 11.5px; color: #333; }
.s-font { width: 123px; } .s-size { width: 43px; margin-left: 2px; } .s-gen { width: 139px; }
.caret { width: 0; height: 0; border: 3px solid transparent; border-top: 3px solid #666; border-bottom: 0; margin-left: 3px; border-left-width: 3.5px; border-right-width: 3.5px; }
.caret.dark { border-top-width: 4px; border-left-width: 4px; border-right-width: 4px; }
.grow { margin-left: 8px; }
.vsep { width: 1px; height: 20px; background: #c6c6c6; flex: none; }
.vsep.tall { height: 16px; }
.m5 { margin: 0 5px 0 4px; } .m2 { margin: 0 2px; } .m4 { margin: 0 4px 0 3px; } .m15 { margin: 0 12px 0 15px; }
.m0 { margin: 0 1px; } .m3 { margin: 0 6px 0 3px; } .m7 { margin: 0 7px 0 6px; }
.pressed { width: 22px; height: 23px; background: #c6c6c6; border: 1px solid #8e8e8e; }
.wrapic { margin-right: 0; }
.mergeic { margin-right: 2px; }
.txt { white-space: nowrap; font-size: 11.5px; }
.merge-ch { margin-left: 10px; }
.pct { width: 28px; text-align: center; font-size: 15px; color: #555; flex: none; }
.comma { width: 18px; text-align: center; font: bold 15px/14px "Liberation Serif", serif; color: #555; flex: none; margin-top: -6px; }
.dec2 { margin-left: 5px; }
.edit-col { width: 93px; padding-left: 3px; margin-top: -3px; display: flex; flex-direction: column; }
.e-row { height: 23px; display: flex; align-items: center; }
.as-ch { margin-left: 10px; }
.e-ch { margin-left: 4px; }
.collapse { position: absolute; right: 9px; bottom: 4px; }

.ic-a { font: 17px "Liberation Sans", sans-serif; fill: #555; }
.ic-a.small { font-size: 14px; }
.ic-t { font: 13px "Liberation Sans", sans-serif; fill: #444; text-anchor: middle; }
.ic-t.b { font-weight: bold; }
.ic-t.it { font-style: italic; font-family: "Liberation Serif", serif; font-size: 15px; }
.ic-t.a { font-size: 17px; font-weight: normal; fill: #555; }
.ic-s { font: 10px "Liberation Sans", sans-serif; fill: #444; }
.ic-n { font: 9.5px "Liberation Sans", sans-serif; fill: #444; }
.ic-az { font: bold 15px "Liberation Sans", sans-serif; }
.bl { fill: #3f78b5; } .pu { fill: #9b5fb5; }
.ic-x { font: bold 10px "Liberation Sans", sans-serif; fill: #fff; text-anchor: middle; }

/* Formula bar */
.formula { height: 46px; background: #e6e6e6; display: flex; flex: none; padding-top: 9px; }
.namebox { width: 102px; height: 26px; margin-left: 5px; background: #fff; border: 1px solid #c6c6c6; display: flex; align-items: center; justify-content: space-between; padding: 0 6px; font-size: 12px; color: #444; }
.fdots { width: 30px; display: flex; flex-direction: column; align-items: center; justify-content: center; gap: 2px; height: 26px; }
.fdots i, .tdots i { width: 2px; height: 2px; background: #aaa; }
.fbtns { width: 110px; height: 26px; background: #fff; border: 1px solid #c6c6c6; display: flex; align-items: center; padding-left: 11px; gap: 22px; }
.fx { font: italic bold 13px "Liberation Serif", serif; color: #666; margin-left: -1px; }
.finput { width: 1111px; height: 26px; margin-left: 4px; background: #fff; border: 1px solid #c6c6c6; display: flex; align-items: center; justify-content: flex-end; padding-right: 4px; }

/* Sheet */
.book { height: 475px; display: flex; flex: none; }
.sheet {
  position: relative; width: 1345px; height: 475px; overflow: hidden; background: #fff;
  border-right: 1px solid #8e8e8e;
  display: grid;
  grid-template-columns: 26px 97px 61px 63px 70px 96px 70px 82px 78px 89px 50px 70px 75px 96px 62px 63px 63px 64px 65px 4px;
  grid-template-rows: 17px 17px 42px repeat(23, 17px) 8px;
  font-family: "Liberation Sans", Arial, sans-serif;
  font-size: 13.33px; color: #000;
}
.corner { background: #e6e6e6; border-right: 1px solid #9b9b9b; border-bottom: 1px solid #9b9b9b; position: relative; }
.corner i { position: absolute; right: 2px; bottom: 2px; width: 0; height: 0; border-left: 10px solid transparent; border-bottom: 10px solid #b4b4b4; }
.ch { position: relative; background: #e6e6e6; border-right: 1px solid #b1b1b1; border-bottom: 1px solid #9b9b9b; text-align: center; line-height: 15px; font-size: 13px; color: #333; padding-right: 1px; }
.ch::after { content: ""; position: absolute; right: -1px; top: 17px; width: 1px; height: 460px; background: #d4d4d4; transform: translateX(-1px); }
.ch.sel { background: #d2d2d2; color: #217346; border-bottom: 2px solid #217346; }
.rh { position: relative; grid-column: 1; background: #e6e6e6; border-right: 1px solid #9b9b9b; border-bottom: 1px solid #b1b1b1; display: flex; align-items: center; justify-content: center; font-size: 13px; color: #333; padding-top: 1px; }
.rh.tall { padding-top: 11px; }
.rh::after { content: ""; position: absolute; left: 26px; bottom: -1px; width: 1320px; height: 1px; background: #d4d4d4; }

.kpi-title { grid-column: 7 / 12; grid-row: 3; position: relative; z-index: 1; background: #ff0; border: 1px solid #000; margin-left: -1px; margin-bottom: -1px; color: #f00; font: bold 29.33px/40px "Liberation Sans", Arial, sans-serif; -webkit-text-stroke: 0.4px #f00; padding-left: 5px; letter-spacing: 0.95px; white-space: nowrap; }
.pivot { position: relative; z-index: 1; display: grid; grid-template-rows: repeat(4, 17px); grid-row: 6 / span 4; }
.pv1 { grid-column: 2 / span 3; grid-template-columns: 97px 61px 63px; }
.pv2 { grid-column: 8 / span 4; grid-template-columns: 82px 78px 89px 50px; }
.pv3 { grid-column: 14 / span 3; grid-template-columns: 96px 62px 63px; }
.p-cap, .p-h, .p-g { background: #d7e5fc; font-weight: bold; padding-left: 2px; line-height: 19px; white-space: nowrap; }
.s2 { grid-column: span 2; } .s3 { grid-column: span 3; } .s4 { grid-column: span 4; }
.p-h { position: relative; border-bottom: 1px solid #8db4e2; }
.p-h + .p-h { padding-left: 1px; }
.p-h:last-child { padding-left: 2px; }
.fbtn { position: absolute; right: 0; top: 0; width: 17px; height: 17px; background: #f0f0f0; border: 1px solid #aaa; }
.fbtn::before { content: ""; position: absolute; left: 5px; top: 2px; width: 10px; height: 10px; background: #666; clip-path: polygon(0 0, 100% 0, 65% 45%, 65% 100%, 35% 100%, 35% 45%); }
.fbtn::after { content: ""; position: absolute; left: 1px; top: 10px; width: 0; height: 0; border-left: 2.5px solid transparent; border-right: 2.5px solid transparent; border-top: 3px solid #555; }
.p-v { border-bottom: 1px solid #8db4e2; padding: 3px 0 0 5px; font-weight: bold; display: flex; align-items: center; white-space: nowrap; }
.exp { width: 9px; height: 9px; border: 1px solid #9aa5b8; background: linear-gradient(#f4f6fa, #d5dcea); margin: 0 2px 0 0; flex: none; position: relative; }
.exp::before { content: ""; position: absolute; left: 1px; top: 3px; width: 5px; height: 1px; background: #444; }
.exp::after { content: ""; position: absolute; left: 3px; top: 1px; width: 1px; height: 5px; background: #444; }
.num { justify-content: flex-end; text-align: right; padding: 0 3px 0 0; }
.p-v.num { font-weight: normal; padding: 3px 3px 0 0; }
.frame { position: absolute; left: 26px; top: 33px; width: 1249px; height: 402px; border: 2px solid #000; border-left: 0; z-index: 3; pointer-events: none; }

.chart { position: absolute; z-index: 2; background: #fff; border: 1px solid #d9d9d9; display: flex; flex-direction: column; justify-content: space-between; padding: 8px 12px 9px 10px; }
.c1 { left: 30px; top: 185px; width: 329px; height: 237px; }
.c2 { left: 443px; top: 181px; width: 391px; height: 235px; }
.c3 { left: 875px; top: 182px; width: 344px; height: 236px; padding-left: 9px; }
.plot { position: absolute; left: 0; top: 0; }
.tag { position: relative; align-self: flex-start; height: 17px; padding: 0 3px; line-height: 17px; font-size: 10.67px; letter-spacing: -0.3px; color: #222; background: linear-gradient(#dcdcdc, #bfbfbf); }
.c-foot { position: relative; display: flex; gap: 2px; }
.fb { height: 17px; display: flex; align-items: center; justify-content: space-between; padding: 0 0 0 4px; font-size: 10.67px; letter-spacing: -0.2px; color: #222; background: linear-gradient(#dcdcdc, #bfbfbf); }
.fb-y { width: 57px; } .fb-m { width: 61px; } .fb-q { width: 71px; }
.zoom { margin-left: auto; display: flex; gap: 1px; }
.zoom span { width: 15px; height: 17px; line-height: 16px; text-align: center; font-weight: bold; font-size: 13px; color: #777; background: linear-gradient(#dcdcdc, #c6c6c6); }
.t-title { font: 18.67px "Liberation Sans", sans-serif; fill: #808080; text-anchor: middle; }
.t-y { font: 12px "Liberation Sans", sans-serif; fill: #808080; text-anchor: end; }
.t-c { font: 12px "Liberation Sans", sans-serif; fill: #808080; text-anchor: middle; }
.t-l { font: 12.5px "Liberation Sans", sans-serif; fill: #808080; }
.axis { stroke: #d9d9d9; fill: none; }
.barrect { fill: url(#bar); stroke: #4a7fe0; }
.leg { fill: #8fb0f8; stroke: #4a7fe0; }

.vscroll { width: 21px; display: flex; flex-direction: column; padding: 2px 3px 0 2px; background: #e6e6e6; }
.sb-btn { width: 16px; height: 15px; background: #f3f3f3; border: 1px solid #8e8e8e; display: flex; align-items: center; justify-content: center; flex: none; }
.sb-thumb { flex: 1; background: #cdcdcd; position: relative; }
.sb-thumb::before { content: ""; position: absolute; left: 0; right: 0; top: 0; height: 425px; background: #f0f0f0; border: 1px solid #8e8e8e; border-top: 0; }
.vscroll .sb-btn:last-child { margin-bottom: -1px; }

/* Tabs */
.tabbar { height: 29px; background: #e6e6e6; border-top: 1px solid #8e8e8e; border-bottom: 1px solid #c6c6c6; display: flex; flex: none; color: #444; }
.tabnav { width: 100px; display: flex; align-items: center; gap: 24px; padding-left: 27px; height: 27px; }
.tab { width: 55px; margin-top: 3px; line-height: 19px; text-align: center; border-left: 1px solid #9b9b9b; height: 19px; font-size: 12px; }
.tab.first { width: 51px; }
.tab.active { width: 61px; height: 24px; margin-top: 0; line-height: 24px; background: #fff; color: #217346; font-weight: 700; font-size: 12.5px; border-right: 1px solid #8e8e8e; border-bottom: 2px solid #217346; }
.tabtools { width: 129px; display: flex; align-items: center; height: 27px; padding-left: 34px; }
.tdots { margin-left: 62px; display: flex; flex-direction: column; gap: 2px; }
.hscroll { display: flex; height: 15px; margin-top: 6px; width: 509px; }
.hb { width: 15px; height: 15px; background: #f3f3f3; border: 1px solid #8e8e8e; display: flex; align-items: center; justify-content: center; flex: none; }
.h-thumb { flex: 1; background: #fff; border: 1px solid #8e8e8e; border-left: 0; }
.h-track { width: 26px; background: #cdcdcd; }

/* Status */
.status { height: 21px; background: #f3f3f3; display: flex; align-items: center; flex: none; font-size: 11px; color: #444; }
.ready { width: 57px; padding-left: 7px; flex: none; }
.acc { margin-right: 1px; }
.views { display: flex; margin-left: auto; height: 21px; }
.view { width: 40px; display: flex; align-items: center; justify-content: center; }
.view.on { background: #c6c6c6; }
.zm { width: 10px; text-align: center; font-size: 15px; margin-left: 4px; line-height: 18px; }
.slider { width: 100px; height: 1px; background: #444; margin: 0 5px; position: relative; }
.slider i { position: absolute; left: 48px; top: -5px; width: 5px; height: 11px; background: #666; }
.slider + .zm { margin-left: 0; }
.pcnt { margin: 0 7px 0 11px; }

/* Taskbar */
.taskbar { height: 40px; background: #101010; display: flex; align-items: center; flex: none; color: #fff; }
.start { width: 48px; display: flex; justify-content: center; }
.search { width: 344px; height: 40px; background: #f2f2f2; border: 1px solid #a6a6a6; display: flex; align-items: center; padding-left: 11px; gap: 11px; font-size: 14px; color: #333; }
.tb { width: 49px; height: 40px; display: flex; align-items: center; justify-content: center; position: relative; flex: none; }
.tb-c { width: 48px; }
.tb-t { width: 50px; padding-right: 4px; }
.on1::after { content: ""; position: absolute; left: 4px; right: 4px; bottom: 0; height: 2px; background: #76b9ed; }
.excel { background: #333; width: 48px; }
.excel::after { content: ""; position: absolute; left: 0; right: 0; bottom: 0; height: 2px; background: #76b9ed; }
.tray { margin-left: auto; display: flex; align-items: center; height: 40px; font-size: 13px; }
.wx { margin-right: 7px; }
.temp { width: 38px; }
.air { width: 86px; white-space: nowrap; font-size: 13.2px; }
.caretup { margin-right: 12px; }
.wifi { margin-right: 8px; }
.cloud { margin-right: 7px; }
.batt { margin-right: 9px; }
.spk { margin-right: 10px; }
.eng { font-size: 11.5px; width: 23px; }
.clock { width: 84px; display: flex; flex-direction: column; align-items: center; font-size: 12.5px; line-height: 19px; }
.notif { position: relative; width: 36px; height: 40px; display: flex; align-items: center; padding: 0 0 4px 5px; margin-right: 10px; }
.badge { position: absolute; left: 13px; top: 19px; width: 17px; height: 17px; border-radius: 50%; background: #333; border: 1px solid #666; font-size: 11px; line-height: 15px; text-align: center; color: #fff; }
```
